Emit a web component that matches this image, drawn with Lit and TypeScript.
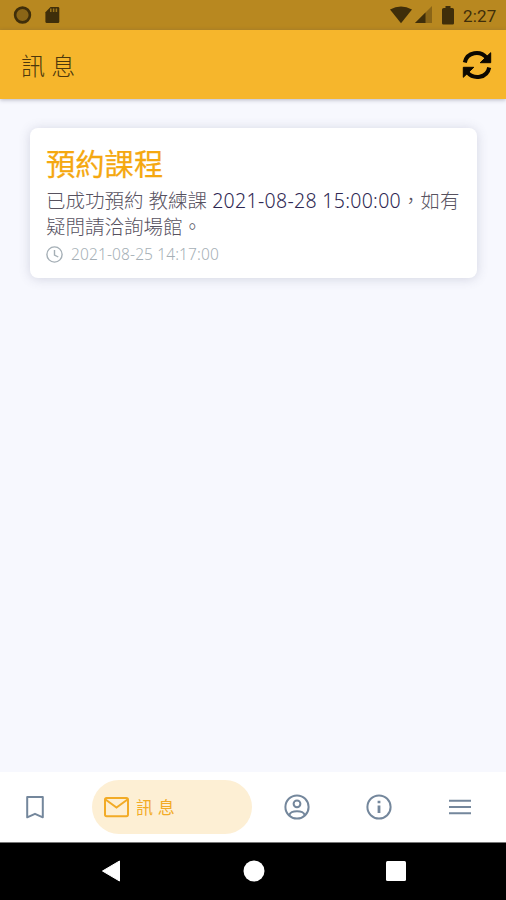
import { LitElement, html, css, svg } from "lit";
import { customElement } from "lit/decorators.js";

@customElement("status-bar")
class StatusBar extends LitElement {
  static styles = css`
    :host { display: flex; height: 30px; background: #b88820; color: #3f2e0a; justify-content: space-between; align-items: center; padding: 0 9px 0 13px; box-sizing: border-box; flex: none; }
    .group { display: flex; align-items: center; }
    svg { display: block; }
    .sd { margin-left: 13px; }
    .signal { margin-left: 3px; }
    .battery { margin-left: 10px; }
    .time { margin-left: 9px; font: 400 17px/30px Roboto, sans-serif; width: 34px; white-space: nowrap; padding-top: 1px; box-sizing: border-box; height: 30px; letter-spacing: .2px; }
  `;
  render() {
    return html`
      <div class="group">
        <svg width="19" height="20" viewBox="0 0 19 20"><circle cx="9.5" cy="10" r="7.4" fill="#8a6517" stroke="#3f2e0a" stroke-width="2.6"/></svg>
        <svg class="sd" width="15" height="20" viewBox="0 0 15 20"><path fill="#3f2e0a" d="M5.5 2H13q1.300 0 1.300 1.300v13.200q0 1.500-1.300 1.500H1.800Q.4 18 .4 16.500V7.200z"/><path stroke="#9b741b" stroke-width="1.500" d="M5.800 3.500v3.500M8.600 3.500v3.500M11.400 3.500v3.500"/></svg>
      </div>
      <div class="group">
        <svg width="22" height="18" viewBox="0 0 22 18"><path fill="#3f2e0a" d="M0 3.600Q11-2.800 22 3.600L11 17.200z"/></svg>
        <svg class="signal" width="17" height="18" viewBox="0 0 17 18"><path fill="#8a6517" d="M17 0v17H0z"/><path fill="#3f2e0a" d="M10.500 6.500V17H0z"/></svg>
        <svg class="battery" width="12" height="19" viewBox="0 0 12 19"><path fill="#3f2e0a" d="M3.500 0h5v2h1.700q1.800 0 1.800 1.600v13.600q0 1.300-1.300 1.300H1.300Q0 18.500 0 17.200V3.600Q0 2 1.800 2h1.700z"/></svg>
        <span class="time">2:27</span>
      </div>`;
  }
}

@customElement("title-bar")
class TitleBar extends LitElement {
  static styles = css`
    :host { display: flex; height: 69px; background: #f6b62c; align-items: center; justify-content: space-between; padding: 0 14px 0 21px; box-sizing: border-box; flex: none; box-shadow: 0 1px 4px rgba(60, 60, 90, .35); z-index: 1; }
    .title { font: 300 24px/36px "Noto Sans CJK TC", sans-serif; color: #4c370c; word-spacing: 1px; }
    svg { display: block; }
  `;
  render() {
    return html`<div class="title">訊 息</div>
      <svg width="30" height="30" viewBox="0 0 30 30">
        <g fill="none" stroke="#0c0800" stroke-width="4"><path d="M2.800 12.500C5 1.500 18.500 .500 24.500 7.500"/><path d="M27.200 17.500C25 28.500 11.500 29.500 5.500 22.500"/></g>
        <path fill="#0c0800" stroke="#0c0800" stroke-linejoin="round" d="M28.700 2.700v10h-10.500zM1.300 27.300v-10h10.500z"/>
      </svg>`;
  }
}

@customElement("message-card")
class MessageCard extends LitElement {
  static styles = css`
    :host { display: block; width: 447px; height: 150px; margin: 29px 0 0 30px; padding: 14px 16px 16px; box-sizing: border-box; border-radius: 8px; background: #fff; box-shadow: 0 1px 12px rgba(70, 75, 110, .2); font-family: "Noto Sans", "Noto Sans CJK TC", sans-serif; }
    .heading { font: 400 29.300px/40px "Noto Sans CJK TC", sans-serif; color: #f5a810; -webkit-text-stroke: .25px #f5a810; white-space: nowrap; }
    .body { font-weight: 300; font-size: 19.500px; line-height: 25.500px; color: #57525f; margin-top: 6px; white-space: nowrap; }
    .when { color: #2e2852; letter-spacing: .31px; }
    .meta { display: flex; align-items: center; height: 24px; margin-top: 3px; color: #a5afb6; font-size: 15.500px; font-weight: 300; gap: 8px; }
    .stamp { letter-spacing: .13px; }
    svg { display: block; }
  `;
  render() {
    return html`
      <div class="heading">預約課程</div>
      <div class="body">已成功預約 教練課 <span class="when">2021-08-28 15:00:00</span>，如有<br>疑問請洽詢場館。</div>
      <div class="meta">
        <svg width="17" height="17" viewBox="0 0 17 17" fill="none" stroke="currentColor" stroke-width="1.400"><circle cx="8.500" cy="8.500" r="7.600"/><path d="M8.500 4v5l3.800 2"/></svg>
        <span class="stamp">2021-08-25 14:17:00</span>
      </div>`;
  }
}

const icon = (shapes: unknown) => html`<svg width="28" height="28" viewBox="0 0 28 28" fill="none" stroke="currentColor" stroke-width="2">${shapes}</svg>`;

@customElement("tab-bar")
class TabBar extends LitElement {
  static styles = css`
    :host { display: flex; height: 70px; background: #fff; align-items: center; color: #74879c; padding: 0 32px 0 21px; box-sizing: border-box; flex: none; }
    svg { display: block; flex: none; }
    .active { display: flex; align-items: center; gap: 6px; width: 160px; height: 54px; margin-left: 43px; padding-left: 10px; box-sizing: border-box; border-radius: 27px; background: #fdefd4; color: #f2ab26; }
    .label { font: 400 17px/26px "Noto Sans CJK TC", sans-serif; word-spacing: 1px; }
    .rest { display: flex; flex: 1; justify-content: space-between; margin-left: 31px; }
  `;
  render() {
    return html`
      ${icon(svg`<path d="M6.200 4h15.600v20.300l-7.800-3.500-7.800 3.500z" stroke-linejoin="round"/>`)}
      <div class="active">
        ${icon(svg`<rect x="3" y="5" width="23" height="18.200" rx="1.600"/><path d="M3.500 6.500l11 8 11-8"/>`)}
        <span class="label">訊 息</span>
      </div>
      <div class="rest">
        ${icon(svg`<circle cx="14" cy="14" r="11.600"/><circle cx="14" cy="10.800" r="3.400"/><path d="M6.500 22.300c0-5.500 15-5.500 15 0"/>`)}
        ${icon(svg`<circle cx="14" cy="14" r="11.600"/><path d="M14 12.500v7.500M14 7.800v2.400" stroke-width="2.800"/>`)}
        ${icon(svg`<path d="M3 7.800h22M3 14h22M3 20.200h22"/>`)}
      </div>`;
  }
}

@customElement("system-nav")
class SystemNav extends LitElement {
  static styles = css`
    :host { display: flex; height: 58px; background: #000; border-top: 1px solid #777; box-sizing: border-box; justify-content: space-between; align-items: center; padding: 0 100px 1px 101px; flex: none; }
    svg { display: block; }
  `;
  render() {
    return html`
      <svg width="20" height="22" viewBox="0 0 20 22"><path fill="#fff" stroke="#fff" stroke-linejoin="round" d="M1.500 11L18.500 1v20z"/></svg>
      <svg width="22" height="22" viewBox="0 0 22 22"><circle cx="11" cy="11" r="10.500" fill="#fff"/></svg>
      <svg width="20" height="20" viewBox="0 0 20 20"><rect width="20" height="20" rx="1.500" fill="#fff"/></svg>`;
  }
}

@customElement("app-root")
class AppRoot extends LitElement {
  static styles = css`
    :host { display: flex; flex-direction: column; width: 506px; height: 900px; background: #f7f8fe; overflow: hidden; }
    .content { flex: 1; display: flow-root; }
  `;
  render() {
    return html`<status-bar></status-bar><title-bar></title-bar>
      <main class="content"><message-card></message-card></main>
      <tab-bar></tab-bar><system-nav></system-nav>`;
  }
}
